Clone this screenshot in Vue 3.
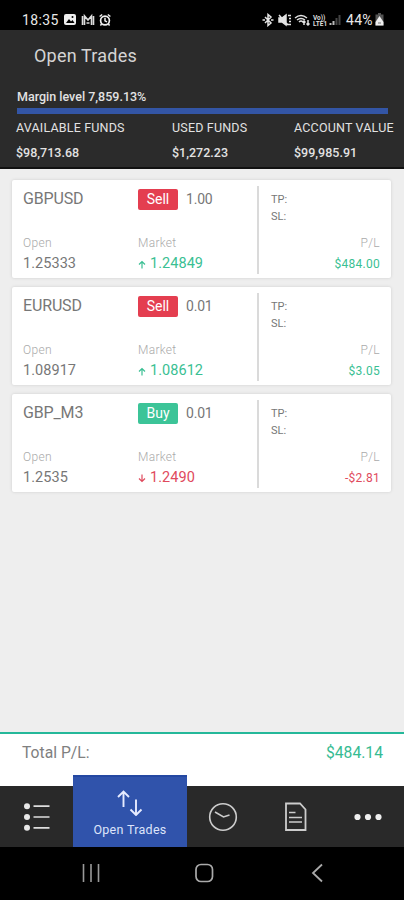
<script setup>
import {computed, ref} from "vue";

const funds = ref([
  {label: "AVAILABLE FUNDS", value: "$98,713.68"},
  {label: "USED FUNDS", value: "$1,272.23"},
  {label: "ACCOUNT VALUE", value: "$99,985.91"}
]);

const trades = ref([
  {symbol: "GBPUSD", side: "Sell", size: "1.00", open: "1.25333", market: "1.24849", up: true, pl: 484.00},
  {symbol: "EURUSD", side: "Sell", size: "0.01", open: "1.08917", market: "1.08612", up: true, pl: 3.05},
  {symbol: "GBP_M3", side: "Buy", size: "0.01", open: "1.2535", market: "1.2490", up: false, pl: -2.81}
]);

const money = (n) => (n < 0 ? "-$" : "$") + Math.abs(n).toFixed(2);

const total = ref(484.14);
const totalText = computed(() => money(total.value));
</script>

<template>
  <div class="phone">
    <div class="status">
      <span class="time">18:35</span>
      <svg width="50" height="14" viewBox="0 0 50 14">
        <rect x="1" y="1" width="12" height="11" rx="2" fill="#eee"/>
        <path d="M3 10l3-4 2 2.4L9.500 7l2 3z" fill="#000"/>
        <circle cx="9.500" cy="4" r="1" fill="#000"/>
        <path d="M21.500 12V3l3.500 4 3.500-4v9M19.500 3v9M30.500 3v9M23.500 10h3" fill="none" stroke="#ddd" stroke-width="1.600"/>
        <circle cx="42" cy="7.500" r="4.400" fill="none" stroke="#eee" stroke-width="1.700"/>
        <path d="M42 4.800v3l2 1M36.600 3.500l2.600-2M47.400 3.500l-2.600-2M38.600 11l-1.200 1.500M45.400 11l1.200 1.500" fill="none" stroke="#eee" stroke-width="1.500"/>
      </svg>
      <svg class="right-icons" width="82" height="14" viewBox="0 0 82 14">
        <g fill="none" stroke="#e4e4e4" stroke-width="1.500">
          <path d="M3 4l6 6-3 2.500v-11L9 4l-6 6M.500 7H3M9 7h2.500"/>
          <path d="M17 5h3l4-3v10l-4-3h-3zM17 2l9 10" fill="#e4e4e4"/>
          <path d="M26 2.500h3M27 5.500h2M27 8.500h2M26 11.500h3"/>
          <path d="M33 5q6-5 12 0M35 7q4-3 8 0M37 9q2-2 4 0"/>
          <path d="M42 12V8m-1.500 1.500L42 8l1.500 1.500M46 7v5m-1.500-1.500L46 12l1.500-1.500"/>
        </g>
        <text x="51" y="6.500" class="volte">Vo))</text>
        <text x="51" y="13" class="volte">LTE1</text>
        <path d="M67.500 12v-2h2v2zM70.500 12V8h2v4z" fill="#bbb"/>
        <path d="M73.500 12V5h2v7zM76.500 12V2h2v10z" fill="#444"/>
      </svg>
      <span class="percent">44%</span>
      <svg width="9" height="13" viewBox="0 0 9 13">
        <path d="M3 0h3v1.500h2.500v11H.500v-11H3z" fill="#555"/>
        <path d="M.500 9L4.500 3 8.500 9v3.500h-8z" fill="#eee"/>
        <path d="M3 10h3" stroke="#777"/>
      </svg>
    </div>

    <header class="header">
      <h1>Open Trades</h1>
      <p class="margin-level">Margin level 7,859.13%</p>
      <div class="bar"></div>
      <div class="funds">
        <div v-for="f in funds" :key="f.label">
          <div class="fund-label">{{ f.label }}</div>
          <div class="fund-value">{{ f.value }}</div>
        </div>
      </div>
    </header>

    <main class="list">
      <div v-for="t in trades" :key="t.symbol" class="card">
        <div>
          <div class="symbol">{{ t.symbol }}</div>
          <div class="caption">Open</div>
          <div class="price"><span>{{ t.open }}</span></div>
        </div>
        <div>
          <div class="order">
            <span class="badge" :class="t.side.toLowerCase()">{{ t.side }}</span>
            <span class="size">{{ t.size }}</span>
          </div>
          <div class="caption">Market</div>
          <div class="price" :class="t.up ? 'gain' : 'loss'">
            <svg width="8" height="9" viewBox="0 0 8 9">
              <path :d="t.up ? 'M4 8.500V1.500M1 4.500l3-3 3 3' : 'M4 .500V7.500M1 4.500l3 3 3-3'" fill="none" stroke="currentColor" stroke-width="1.200"/>
            </svg>
            <span>{{ t.market }}</span>
          </div>
        </div>
        <div class="limits">
          <div class="limit">TP:</div>
          <div class="limit">SL:</div>
          <div class="caption">P/L</div>
          <div class="pl" :class="t.pl >= 0 ? 'gain' : 'loss'">{{ money(t.pl) }}</div>
        </div>
      </div>
    </main>

    <div class="total">
      <span>Total P/L:</span>
      <span class="total-value">{{ totalText }}</span>
    </div>

    <nav class="tabs">
      <div class="tab">
        <svg width="28" height="28" viewBox="0 0 28 28">
          <g fill="#e8e8e8"><circle cx="4" cy="3.200" r="3"/><circle cx="4" cy="14" r="3"/><circle cx="4" cy="24.800" r="3"/></g>
          <path d="M10.500 3.200h16M10.500 14h16M10.500 24.800h16" stroke="#ddd" stroke-width="1.700"/>
        </svg>
      </div>
      <div class="tab active">
        <svg width="26" height="26" viewBox="0 0 26 26">
          <path d="M6.500 17V1.500M1 7l5.500-5.500L12 7M19 9.500V25M13.500 19.500L19 25l5.500-5.500" fill="none" stroke="#e6ebff" stroke-width="1.900"/>
        </svg>
        <span>Open Trades</span>
      </div>
      <div class="tab">
        <svg width="30" height="30" viewBox="0 0 30 30">
          <circle cx="15" cy="15" r="13.300" fill="none" stroke="#ccc" stroke-width="1.600"/>
          <path d="M7 10l8.500 5 6-2" fill="none" stroke="#ccc" stroke-width="1.600"/>
        </svg>
      </div>
      <div class="tab">
        <svg width="24" height="30" viewBox="0 0 24 30">
          <path d="M2 1.500h14l5.500 6V28H2z" fill="none" stroke="#ccc" stroke-width="1.800"/>
          <path d="M5 10.500h6.500M5 15.500h13M5 20h13" stroke="#ccc" stroke-width="1.600"/>
        </svg>
      </div>
      <div class="tab">
        <svg width="28" height="8" viewBox="0 0 28 8">
          <g fill="#eee"><circle cx="3.500" cy="4" r="3.100"/><circle cx="14" cy="4" r="3.100"/><circle cx="24.500" cy="4" r="3.100"/></g>
        </svg>
      </div>
    </nav>

    <div class="system">
      <svg width="18" height="20" viewBox="0 0 18 20">
        <path d="M1.500 1v18M9 1v18M16.500 1v18" stroke="#999" stroke-width="1.600"/>
      </svg>
      <svg width="20" height="20" viewBox="0 0 20 20">
        <rect x="1" y="1.500" width="16.500" height="17" rx="5" fill="none" stroke="#aaa" stroke-width="1.700"/>
      </svg>
      <svg width="18" height="20" viewBox="0 0 18 20">
        <path d="M13 1.500L4 10l9 8.500" fill="none" stroke="#aaa" stroke-width="1.800"/>
      </svg>
    </div>
  </div>
</template>

<style>
body {
  margin: 0;
}
</style>

<style scoped>
* {
  box-sizing: border-box;
}

svg {
  flex: none;
  display: block;
}

.phone {
  width: 404px;
  height: 900px;
  display: flex;
  flex-direction: column;
  background: #eee;
  font-family: Roboto, sans-serif;
  overflow: hidden;
}

.status {
  height: 30px;
  padding: 9px 20px 0 22px;
  display: flex;
  align-items: center;
  background: #000;
  color: #e8e8e8;
  flex: none;
}

.time {
  width: 41px;
  font-size: 14px;
  letter-spacing: 0.4px;
}

.right-icons {
  margin-left: auto;
}

.volte {
  font-size: 6.5px;
  font-weight: 700;
  fill: #ddd;
}

.percent {
  width: 29px;
  margin-left: 2px;
  font-size: 14px;
  letter-spacing: 0.3px;
}

.header {
  height: 139px;
  flex: none;
  background: #2b2b2b;
  color: #e2e2e2;
  border-bottom: 2px solid #111;
}

h1 {
  margin: 0;
  padding: 14px 0 0 34px;
  font-size: 18px;
  line-height: 24px;
  font-weight: 400;
  letter-spacing: 0.2px;
  color: #d4d4d4;
}

.margin-level {
  margin: 0;
  padding: 21px 0 0 17px;
  font-size: 12.5px;
  line-height: 16px;
  font-weight: 500;
}

.bar {
  height: 6px;
  margin: 3px 16px 0 17px;
  background: #3355a5;
}

.funds {
  display: grid;
  grid-template-columns: 156px 122px 1fr;
  padding: 6px 0 0 16px;
  white-space: nowrap;
}

.fund-label {
  font-size: 12.5px;
  line-height: 16px;
  letter-spacing: 0.18px;
}

.fund-value {
  margin-top: 9px;
  font-size: 12.5px;
  line-height: 16px;
  font-weight: 500;
}

.list {
  flex: 1;
  display: flex;
  flex-direction: column;
  gap: 9px;
  padding: 11px 13px 0 12px;
}

.card {
  height: 98px;
  display: grid;
  grid-template-columns: 115px 119px 1fr;
  padding: 6px 11px 4px;
  background: #fff;
  border-radius: 2px;
  box-shadow: 0 0 3px #ccc;
  color: #777;
}

.symbol {
  height: 48px;
  padding-top: 3px;
  font-size: 16px;
  line-height: 20px;
  letter-spacing: -0.15px;
}

.order {
  height: 48px;
  padding-top: 3px;
  display: flex;
  align-items: flex-start;
}

.badge {
  width: 40px;
  height: 21px;
  border-radius: 2px;
  color: #fff;
  font-size: 14px;
  line-height: 21px;
  text-align: center;
}

.badge.sell {
  background: #e43e50;
}

.badge.buy {
  background: #3cc498;
}

.size {
  margin-left: 8px;
  font-size: 14px;
  line-height: 21px;
  letter-spacing: -0.2px;
}

.caption {
  font-size: 12px;
  line-height: 18px;
  font-weight: 300;
  letter-spacing: 0.3px;
  color: #aaa;
}

.price {
  display: flex;
  align-items: center;
  gap: 4px;
  margin-top: 3px;
  font-size: 14.5px;
  line-height: 18px;
  letter-spacing: 0.05px;
}

.gain {
  color: #3abf93;
}

.loss {
  color: #df4a5d;
}

.limits {
  border-left: 2px solid #dadada;
  padding-left: 12px;
  font-size: 11px;
}

.limit {
  line-height: 17px;
  position: relative;
  top: 5px;
}

.limits .caption {
  margin-top: 14px;
  text-align: right;
}

.pl {
  margin-top: 3px;
  font-size: 12px;
  line-height: 18px;
  letter-spacing: 0.25px;
  text-align: right;
}

.total {
  height: 54px;
  flex: none;
  display: flex;
  justify-content: space-between;
  padding: 8px 21px 0 22px;
  border-top: 2px solid #25b89a;
  background: #fff;
  color: #808080;
  font-size: 15.7px;
  line-height: 22px;
}

.total-value {
  color: #36bb92;
}

.tabs {
  height: 61px;
  flex: none;
  display: grid;
  grid-template-columns: 73px 114px 72px 73px 72px;
  background: #292929;
}

.tab {
  display: flex;
  align-items: center;
  justify-content: center;
}

.tab.active {
  height: 72px;
  margin-top: -11px;
  flex-direction: column;
  padding-top: 3px;
  background: #3053ab;
  border-top: 2px solid #2448a2;
  color: #dde4fa;
  font-size: 12.5px;
  letter-spacing: 0.3px;
  line-height: 16px;
  gap: 6px;
}

.system {
  height: 53px;
  flex: none;
  display: flex;
  justify-content: space-between;
  align-items: center;
  padding: 0 77px 2px 82px;
  background: #000;
}
</style>
